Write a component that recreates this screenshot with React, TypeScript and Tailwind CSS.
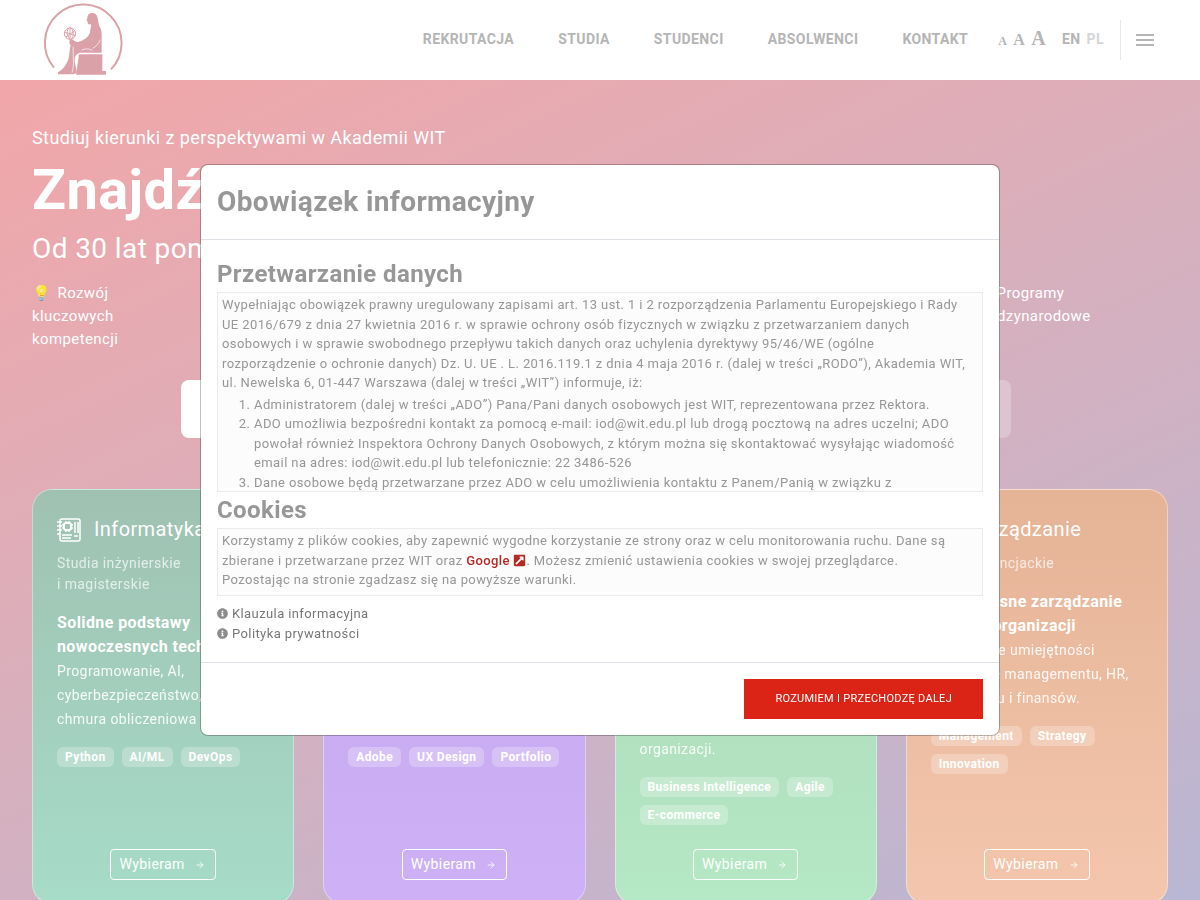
import React from "react";
import { ArrowRight } from "lucide-react";
import { FaExternalLinkSquareAlt, FaInfoCircle } from "react-icons/fa";
import { MdMenu } from "react-icons/md";

const navItems = ["Rekrutacja", "Studia", "Studenci", "Absolwenci", "Kontakt"];

const programs = [
  {
    title: "Informatyka",
    level: ["Studia inżynierskie", "i magisterskie"],
    lead: ["Solidne podstawy", "nowoczesnych technologii"],
    text: ["Programowanie, AI,", "cyberbezpieczeństwo,", "chmura obliczeniowa"],
    tags: ["Python", "AI/ML", "DevOps"],
    color: "bg-linear-to-b from-[#9fc1b2] to-[#a6dcc8]",
  },
  {
    title: "Grafika",
    level: ["Studia licencjackie", "i magisterskie"],
    lead: ["Kreatywność", "i projektowanie"],
    text: ["Grafika cyfrowa,", "animacja,", "projektowanie stron"],
    tags: ["Adobe", "UX Design", "Portfolio"],
    color: "bg-linear-to-b from-[#c4a8ee] to-[#cdb0f5]",
  },
  {
    title: "Informatyka w Biznesie",
    level: ["Studia inżynierskie", "i magisterskie"],
    lead: ["Technologia", "w biznesie"],
    text: ["Nowoczesne narzędzia", "cyfrowe dla każdej", "organizacji."],
    tags: ["Business Intelligence", "Agile", "E-commerce"],
    color: "bg-linear-to-b from-[#acd6b8] to-[#b5e8c5]",
  },
  {
    title: "Zarządzanie",
    level: ["Studia licencjackie"],
    lead: ["Nowoczesne zarządzanie", "w dużej organizacji"],
    text: ["Zdobywane umiejętności", "w zakresie managementu, HR,", "marketingu i finansów."],
    tags: ["Management", "Strategy", "Innovation"],
    color: "bg-linear-to-b from-[#e5b396] to-[#f4c6ad]",
  },
];

const Logo = () => (
  <svg viewBox="36 0 246 240" className="h-20 w-[82px]" fill="#dba1a8" aria-hidden="true">
    <path d="M72 203A115 115 0 1 1 243 208" fill="none" stroke="#dba1a8" strokeWidth="6" />
    <path d="M172 54C172 44 178 39 187 39C197 39 202 45 203 54C205 63 206 72 208 79C214 88 215 94 215 104V158H150C139 161 134 168 134 179C134 191 139 201 140 219L130 223H84V217C98 210 109 195 115 178C119 164 118 148 122 135C116 130 117 122 124 116C133 121 137 127 145 126C162 121 174 112 180 98C180 90 184 82 183 73C176 75 172 70 173 65L169 61Z" />
    <path d="M147 163H217V213H228V224H138Z" />
    <path
      d="M188 145C197 141 207 130 211 119M154 151C165 145 177 146 187 151"
      fill="none"
      stroke="#fff"
      strokeWidth="2"
    />
    <path d="M130 140C127 167 135 187 126 218" fill="none" stroke="#fff" strokeWidth="2" />
    <g fill="none" stroke="#dba1a8" strokeWidth="3">
      <circle cx="120" cy="101" r="17" />
      <path d="M104 96L136 107M107 111L134 93M115 85C108 97 112 111 122 118M124 84C132 96 130 109 125 117M120 80V122" />
    </g>
  </svg>
);

const BoardIcon = () => (
  <svg
    viewBox="0 0 24 24"
    className="h-6 w-6 shrink-0"
    fill="none"
    stroke="currentColor"
    strokeWidth="1.5"
    aria-hidden="true"
  >
    <path d="M3 3C3 2 4 1 5 1H21C22 1 23 2 23 3V21C23 22 22 23 21 23H5C4 23 3 22 3 21Z" />
    <path d="M0 4H5M0 8H5M0 12H5M0 16H3" />
    <rect x="7" y="5" width="7" height="7" rx="2" strokeWidth="2" />
    <path d="M9 3V5M12 3V5M9 12V14M12 12V14M5 7H7M5 10H7M14 7H16M14 10H16" />
    <path d="M18 4V15M21 4V15M5 17H15M5 20H14M17 18H21" />
  </svg>
);

const Header = () => (
  <header className="flex h-20 items-center justify-between bg-white pl-[42px] pr-[43px] text-sm font-bold text-[#b5b5b5]">
    <a href="#" aria-label="Akademia WIT">
      <Logo />
    </a>
    <div className="flex items-center">
      <nav className="flex gap-11 pb-0.5 uppercase">
        {navItems.map((item) => (
          <a key={item} href="#">
            {item}
          </a>
        ))}
      </nav>
      <div className="ml-[30px] flex items-baseline gap-1.5 pb-1 font-['Liberation_Serif',serif]">
        <button className="text-xs">A</button>
        <button className="text-base">A</button>
        <button className="text-xl">A</button>
      </div>
      <div className="ml-4 flex gap-1.5 pb-0.5">
        <a href="#">EN</a>
        <a href="#" className="text-[#d6d6d6]">
          PL
        </a>
      </div>
      <div className="ml-4 h-10 w-px bg-[#e8e8e8]" />
      <button className="ml-3" aria-label="Menu">
        <MdMenu size={24} />
      </button>
    </div>
  </header>
);

const Hero = () => (
  <section className="text-white">
    <p className="text-lg leading-7">Studiuj kierunki z perspektywami w Akademii WIT</p>
    <h1 className="mt-1 text-[56px] font-bold leading-[68px]">Znajdź swój kierunek</h1>
    <p className="mt-[5px] text-[28px] leading-10">Od 30 lat pomagamy w rozwoju</p>
    <div className="mt-[13px] flex justify-between text-[15px] leading-[23px]">
      <p className="w-24">
        <span className="mr-0.5 opacity-70 brightness-125">💡</span> Rozwój kluczowych kompetencji
      </p>
      <p className="w-[197px]">
        <span className="mr-0.5 opacity-70 brightness-125">🌍</span> Programy
        <br />
        międzynarodowe
      </p>
    </div>
    <div className="mt-[29px] flex justify-center pr-2">
      <div className="flex w-[830px] gap-4">
        <a href="#" className="h-[58px] flex-1 rounded-lg bg-white" aria-label="Rekrutacja" />
        <a href="#" className="h-[58px] flex-1 rounded-lg bg-white/25" aria-label="Studia" />
      </div>
    </div>
  </section>
);

const ProgramCard = ({ program }: { program: (typeof programs)[number] }) => (
  <article
    className={`flex min-h-[415px] flex-col rounded-[20px] border border-white/40 px-6 py-[23px] text-white ${program.color}`}
  >
    <div className="flex items-start gap-[13px]">
      <span className="flex h-[34px] items-center">
        <BoardIcon />
      </span>
      <h2 className="text-xl leading-8">{program.title}</h2>
    </div>
    <p className="mt-1.5 text-sm leading-[21px] opacity-70">
      {program.level.map((line) => (
        <span key={line} className="block whitespace-nowrap">
          {line}
        </span>
      ))}
    </p>
    <p className="mt-4 text-sm leading-6">
      {program.lead.map((line) => (
        <strong key={line} className="block whitespace-nowrap text-base leading-6">
          {line}
        </strong>
      ))}
      {program.text.map((line) => (
        <span key={line} className="block whitespace-nowrap opacity-90">
          {line}
        </span>
      ))}
    </p>
    <ul className="mt-4 flex flex-wrap gap-2">
      {program.tags.map((tag) => (
        <li key={tag} className="rounded-md bg-white/25 px-2 text-xs font-bold leading-5">
          {tag}
        </li>
      ))}
    </ul>
    <button className="mx-auto mt-auto flex items-center gap-2.5 rounded border border-white px-2 text-sm leading-[29px]">
      Wybieram
      <ArrowRight size={10} className="mr-0.5" />
    </button>
  </article>
);

const InfoDialog = () => (
  <div className="fixed inset-0 flex items-center justify-center p-4">
    <div
      role="dialog"
      aria-modal="true"
      aria-labelledby="info-title"
      className="w-full max-w-[800px] rounded-lg border border-black/25 bg-white bg-clip-padding text-[13px] leading-normal text-[#979797]"
    >
      <div className="border-b border-[#dee2e6] p-4">
        <h2 id="info-title" className="text-[28px] font-bold leading-[42px]">
          Obowiązek informacyjny
        </h2>
      </div>
      <div className="px-4 pb-[19px] pt-4">
        <h3 className="text-2xl font-bold leading-9">Przetwarzanie danych</h3>
        <div className="h-[200px] overflow-y-auto border border-[#ebebeb] bg-[#fcfcfc] py-0.5 pl-1 pr-2.5">
          <p className="mb-0.5">
            Wypełniając obowiązek prawny uregulowany zapisami art. 13 ust. 1 i 2 rozporządzenia
            Parlamentu Europejskiego i Rady UE 2016/679 z dnia 27 kwietnia 2016 r. w sprawie ochrony
            osób fizycznych w związku z przetwarzaniem danych
            <br />
            osobowych i w sprawie swobodnego przepływu takich danych oraz uchylenia dyrektywy
            95/46/WE (ogólne
            <br />
            rozporządzenie o ochronie danych) Dz. U. UE . L. 2016.119.1 z dnia 4 maja 2016 r. (dalej
            w treści „RODO”), Akademia WIT, ul. Newelska 6, 01-447 Warszawa (dalej w treści „WIT”)
            informuje, iż:
          </p>
          <ol className="list-decimal pl-8">
            <li>
              Administratorem (dalej w treści „ADO”) Pana/Pani danych osobowych jest WIT,
              reprezentowana przez Rektora.
            </li>
            <li>
              ADO umożliwia bezpośredni kontakt za pomocą e-mail: iod@wit.edu.pl lub drogą pocztową
              na adres uczelni; ADO powołał również Inspektora Ochrony Danych Osobowych, z którym
              można się skontaktować wysyłając wiadomość email na adres: iod@wit.edu.pl lub
              telefonicznie: 22 3486-526
            </li>
            <li>
              Dane osobowe będą przetwarzane przez ADO w celu umożliwienia kontaktu z Panem/Panią w
              związku z
            </li>
          </ol>
        </div>
        <h3 className="text-2xl font-bold leading-9">Cookies</h3>
        <div className="min-h-[68px] border border-[#ebebeb] bg-[#fcfcfc] px-1 py-0.5">
          Korzystamy z plików cookies, aby zapewnić wygodne korzystanie ze strony oraz w celu
          monitorowania ruchu. Dane są zbierane i przetwarzane przez WIT oraz{" "}
          <a href="#" className="font-medium text-[#b52a24]">
            Google <FaExternalLinkSquareAlt className="inline align-[-2px]" />
          </a>
          . Możesz zmienić ustawienia cookies w swojej przeglądarce.
          <br />
          Pozostając na stronie zgadzasz się na powyższe warunki.
        </div>
        <ul className="mt-2 text-[#777]">
          <li>
            <a href="#">
              <FaInfoCircle size={11} className="mr-1 inline align-[-1px] text-[#8c8c8c]" />
              Klauzula informacyjna
            </a>
          </li>
          <li>
            <a href="#">
              <FaInfoCircle size={11} className="mr-1 inline align-[-1px] text-[#8c8c8c]" />
              Polityka prywatności
            </a>
          </li>
        </ul>
      </div>
      <div className="flex justify-end border-t border-[#dee2e6] p-4">
        <button className="h-10 bg-[#db2316] px-[31px] text-[11px] uppercase tracking-wide text-white">
          Rozumiem i przechodzę dalej
        </button>
      </div>
    </div>
  </div>
);

const App = () => {
  return (
    <div className="h-screen overflow-hidden bg-linear-155 from-[#f4a5a6] via-[#d8afbc] to-[#b9b7d4] font-[Roboto,sans-serif] tracking-wide">
      <Header />
      <main className="px-8 pt-11">
        <Hero />
        <section className="mt-[51px] grid grid-cols-4 gap-[29px]">
          {programs.map((program) => (
            <ProgramCard key={program.title} program={program} />
          ))}
        </section>
      </main>
      <InfoDialog />
    </div>
  );
};

export default App;
